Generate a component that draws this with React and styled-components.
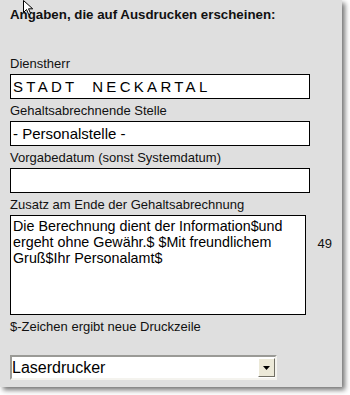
import React from 'react';
import styled, { createGlobalStyle } from 'styled-components';

const GlobalStyle = createGlobalStyle`
    html, body {
        margin: 0;
        padding: 0;
        background: #ffffff;
    }
    body {
        font-family: "Liberation Sans", Arial, sans-serif;
        color: #111;
    }
`;

const Page = styled.div`
    width: 350px;
    height: 395px;
    overflow: hidden;
    position: relative;
`;

const Panel = styled.div`
    width: 342px;
    height: 387px;
    box-sizing: border-box;
    background: #dfdfdf;
    padding: 7px 10px 0 10px;
    box-shadow: 3px 3px 5px rgba(0, 0, 0, 0.55);
    display: flex;
    flex-direction: column;
`;

const Title = styled.div`
    font-weight: bold;
    font-size: 13.3px;
    line-height: 15px;
    color: #111;
    margin-bottom: 34px;
`;

const Field = styled.div`
    display: flex;
    flex-direction: column;
    margin-bottom: ${props => props.$gap || '4px'};
`;

const Label = styled.label`
    display: block;
    font-size: 13px;
    line-height: 15px;
    color: #111;
    margin-bottom: 3px;
`;

const TextInput = styled.input`
    width: 300px;
    height: 25px;
    box-sizing: border-box;
    border: 1px solid #000;
    background: #fff;
    padding: 0 2px;
    margin: 0;
    font-family: "Liberation Sans", Arial, sans-serif;
    font-size: 15px;
    letter-spacing: ${props => props.$spacing || 'normal'};
    color: #000;
    outline: none;
`;

const Row = styled.div`
    display: flex;
    align-items: flex-start;
`;

const TextArea = styled.textarea`
    width: 300px;
    height: 100px;
    box-sizing: border-box;
    border: 1px solid #000;
    background: #fff;
    padding: 2px 2px;
    margin: 0;
    resize: none;
    overflow: hidden;
    font-family: "Liberation Sans", Arial, sans-serif;
    font-size: 14.3px;
    line-height: 16px;
    color: #000;
    outline: none;
`;

const Counter = styled.span`
    font-size: 13px;
    line-height: 15px;
    color: #111;
    padding: 21px 0 0 12px;
`;

const Hint = styled.div`
    font-size: 13px;
    line-height: 15px;
    color: #111;
    margin-bottom: 21px;
`;

const SelectBox = styled.div`
    width: 267px;
    height: 25px;
    box-sizing: border-box;
    border-top: 2px solid #9a9a96;
    border-left: 2px solid #9a9a96;
    border-bottom: 2px solid #f4f3ee;
    border-right: 2px solid #f4f3ee;
    background: #fff;
    display: flex;
    align-items: center;
    justify-content: space-between;
`;

const SelectText = styled.span`
    font-size: 16px;
    color: #000;
    padding-left: 0;
`;

const SelectButton = styled.span`
    width: 17px;
    height: 19px;
    box-sizing: border-box;
    background: #ece9d8;
    border-top: 1px solid #fff;
    border-left: 1px solid #fff;
    border-bottom: 1px solid #716f64;
    border-right: 1px solid #716f64;
    display: flex;
    align-items: center;
    justify-content: center;
`;

const Cursor = styled.svg`
    position: absolute;
    left: 22px;
    top: 0;
`;

export default function App() {
    return (
        <Page>
            <GlobalStyle />
            <Panel>
                <Title>Angaben, die auf Ausdrucken erscheinen:</Title>
                <Field>
                    <Label>Dienstherr</Label>
                    <TextInput $spacing="3.3px" defaultValue="STADT  NECKARTAL" />
                </Field>
                <Field>
                    <Label>Gehaltsabrechnende Stelle</Label>
                    <TextInput defaultValue="- Personalstelle -" />
                </Field>
                <Field>
                    <Label>Vorgabedatum (sonst Systemdatum)</Label>
                    <TextInput defaultValue="" />
                </Field>
                <Field>
                    <Label>Zusatz am Ende der Gehaltsabrechnung</Label>
                    <Row>
                        <TextArea defaultValue={'Die Berechnung dient der Information$und ergeht ohne Gewähr.$ $Mit freundlichem Gruß$Ihr Personalamt$'} />
                        <Counter>49</Counter>
                    </Row>
                </Field>
                <Hint>$-Zeichen ergibt neue Druckzeile</Hint>
                <SelectBox>
                    <SelectText>Laserdrucker</SelectText>
                    <SelectButton>
                        <svg width="7" height="4" viewBox="0 0 7 4">
                            <path d="M0 0h7L3.5 4z" fill="#000" />
                        </svg>
                    </SelectButton>
                </SelectBox>
            </Panel>
            <Cursor width="13" height="16" viewBox="0 0 13 16">
                <path d="M1.5 0.5v12l3-3 2.2 5 2-0.9-2.2-4.8h4.2z" fill="#fff" stroke="#000" strokeWidth="1" />
            </Cursor>
        </Page>
    );
}
